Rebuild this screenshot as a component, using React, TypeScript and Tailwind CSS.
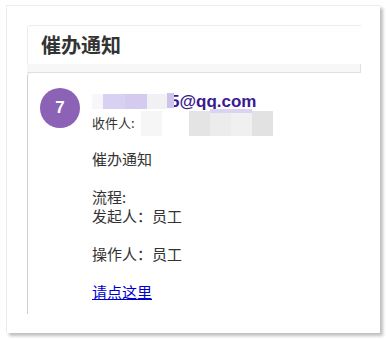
import React from "react";

const cjk = { fontFamily: '"Noto Sans CJK SC", "Liberation Sans", sans-serif' };

const App = () => {
  return (
    <div className="w-[386px] h-[340px] bg-white relative" style={cjk}>
      <div className="absolute left-[6px] top-[5px] w-[374px] h-[328px] bg-white border-t border-l border-[#ececec] shadow-[3px_3px_3px_rgba(0,0,0,0.25)] pl-[20px] pt-[19px]">
        <div className="w-[334px] flex flex-col">
          <div className="h-[39px] bg-white border-l border-t border-[#ececec] rounded-tl-[4px] flex items-center pl-[13px]">
            <span className="text-[20px] font-bold text-[#333] leading-none">催办通知</span>
          </div>
          <div className="h-[9px] bg-[#f7f7f7] border-b border-r border-[#e0e0e0]" />
          <div className="h-[241px] border-l border-[#cfcfcf] rounded-tl-[4px] flex pl-[12px] pt-[15px] gap-[12px]">
            <div className="w-[40px] h-[40px] rounded-full bg-[#8c62b7] flex items-center justify-center shrink-0">
              <span className="text-white font-bold text-[17px]" style={{ fontFamily: '"Liberation Sans", sans-serif' }}>7</span>
            </div>
            <div className="flex flex-col pt-[4px]">
              <div className="flex items-center h-[18px] relative">
                <div className="flex h-[15px]">
                  <span className="w-[11px] bg-[#f7f6fb]" />
                  <span className="w-[22px] bg-[#d9d1f1]" />
                  <span className="w-[22px] bg-[#d4cbee]" />
                  <span className="w-[20px] bg-[#f1f0f2]" />
                </div>
                <span className="text-[17px] font-bold text-[#3a1b8e] leading-none ml-[3px]" style={{ fontFamily: '"Liberation Sans", sans-serif' }}>5@qq.com</span>
                <span className="absolute left-[75px] top-[1px] w-[7px] h-[15px] bg-[#cfc3ec]" />
              </div>
              <div className="flex items-center h-[22px] mt-[2px] relative">
                <span className="text-[13px] text-[#333]">收件人:</span>
                <div className="flex h-[25px] ml-[6px]">
                  <span className="w-[21px] bg-[#f6f6f6]" />
                  <span className="w-[27px]" />
                  <span className="w-[21px] bg-[#e4e4e4]" />
                  <span className="w-[21px] bg-[#ececec]" />
                  <span className="w-[21px] bg-[#f0f0f0]" />
                  <span className="w-[21px] bg-[#e2e2e2]" />
                </div>
                <span className="absolute left-[118px] -top-[3px] w-[42px] h-[4px] bg-[#dcd3f0]" />
              </div>
              <div className="text-[15px] leading-[19px] text-[#333] mt-[15px]">
                <p>催办通知</p>
                <p>&nbsp;</p>
                <p>流程:</p>
                <p>发起人：员工</p>
                <p>&nbsp;</p>
                <p>操作人：员工</p>
                <p>&nbsp;</p>
                <p>
                  <a href="#" className="text-[#0000cc] underline">请点这里</a>
                </p>
              </div>
            </div>
          </div>
        </div>
      </div>
    </div>
  );
};

export default App;
